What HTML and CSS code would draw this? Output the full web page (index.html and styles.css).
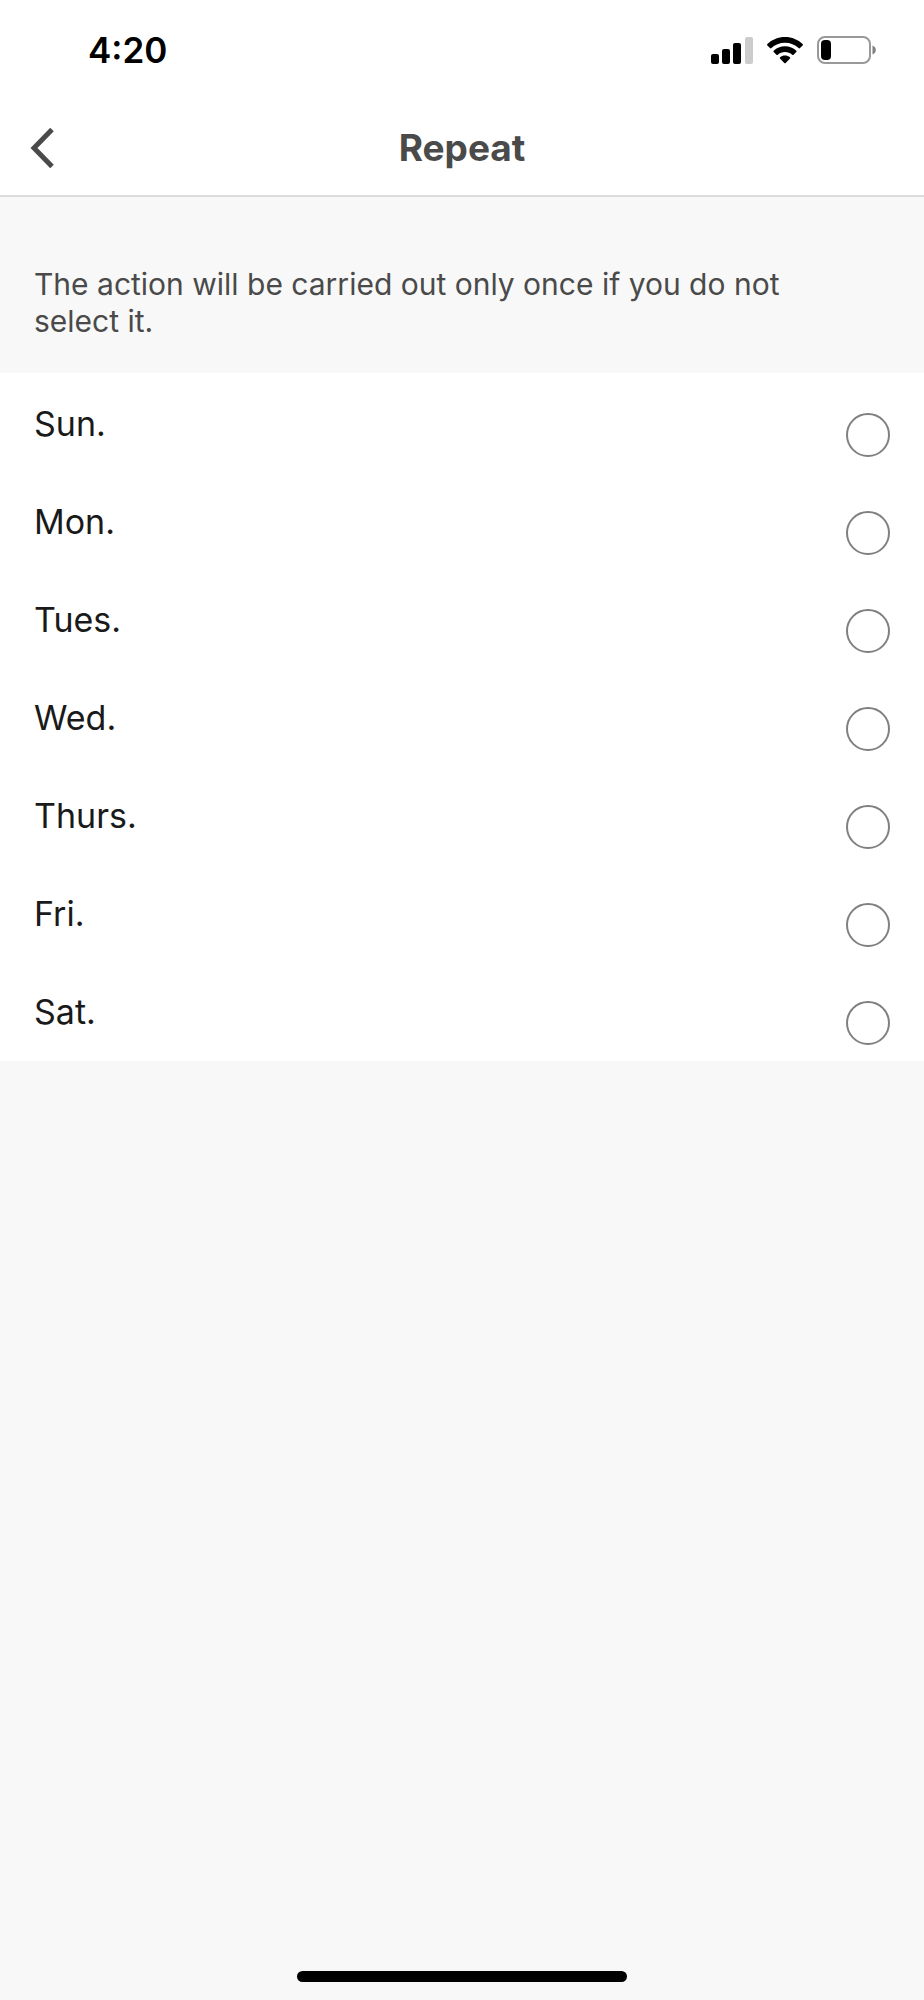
FILE: index.html
```html
<!DOCTYPE html>
<html lang="en">
<head>
  <meta charset="utf-8">
  <meta name="viewport" content="width=device-width, initial-scale=1">
  <title>Repeat</title>
  <link rel="stylesheet" href="styles.css">
</head>
<body>
  <div class="status-bar">
    <span class="time">4:20</span>
    <div class="status-icons">
      <svg class="signal" width="42" height="27" viewBox="0 0 42 27">
        <rect x="0" y="17" width="8" height="10" rx="2"/>
        <rect x="11" y="12" width="8" height="15" rx="2"/>
        <rect x="22" y="6" width="8" height="21" rx="2"/>
        <rect x="34" y="0" width="8" height="27" rx="2" fill="#cccccc"/>
      </svg>
      <svg class="wifi" width="36" height="27" viewBox="0 0 36 27">
        <path d="M18 0C11 0 4.800 2.700 .4 7c-.5.500-.5 1 0 1.500l2.600 2.600c.4.400 1 .4 1.400 0C8 7.700 12.700 5.700 18 5.700s10 2 13.600 5.400c.4.400 1 .4 1.400 0l2.600-2.600c.5-.5.500-1 0-1.500C31.200 2.700 25 0 18 0z"/>
        <path d="M18 9.200c-4.400 0-8.400 1.700-11.300 4.500-.5.500-.5 1 0 1.400l2.700 2.700c.4.400 1 .4 1.400 0 1.900-1.800 4.400-2.800 7.200-2.800s5.300 1 7.200 2.800c.4.400 1 .4 1.400 0l2.700-2.700c.5-.4.500-.9 0-1.400C26.400 10.900 22.400 9.200 18 9.200z"/>
        <path d="M18 18.600c-1.900 0-3.600.6-4.900 1.700-.5.400-.5.900-.1 1.300l4.300 4.400c.4.400 1 .4 1.400 0l4.300-4.400c.4-.4.400-.9-.1-1.300-1.300-1.100-3-1.700-4.900-1.700z"/>
      </svg>
      <svg class="battery" width="59" height="28" viewBox="0 0 59 28">
        <rect x="1" y="1" width="52" height="26" rx="7" fill="none" stroke="#999999" stroke-width="2"/>
        <rect x="4" y="4" width="10" height="20" rx="4"/>
        <path d="M55.500 9.500c2 .7 3.300 2.400 3.300 4.500s-1.300 3.800-3.300 4.500z" fill="#808080"/>
      </svg>
    </div>
  </div>

  <header class="header">
    <button type="button" class="back" aria-label="Back">
      <svg width="24" height="40" viewBox="0 0 24 40">
        <path d="M22 1.500L4 20l18 18.500" fill="none" stroke="#4a4a4a" stroke-width="5"/>
      </svg>
    </button>
    <h1 class="title">Repeat</h1>
  </header>

  <main>
    <p class="hint">The action will be carried out only once if you do not select it.</p>
    <div class="days">
      <label class="day">Sun.<input type="checkbox" class="circle"></label>
      <label class="day">Mon.<input type="checkbox" class="circle"></label>
      <label class="day">Tues.<input type="checkbox" class="circle"></label>
      <label class="day">Wed.<input type="checkbox" class="circle"></label>
      <label class="day">Thurs.<input type="checkbox" class="circle"></label>
      <label class="day">Fri.<input type="checkbox" class="circle"></label>
      <label class="day">Sat.<input type="checkbox" class="circle"></label>
    </div>
  </main>

  <div class="home-bar"></div>
</body>
</html>
```

FILE: styles.css
```css
* {
  box-sizing: border-box;
}
body {
  margin: 0;
  min-height: 100vh;
  display: flex;
  flex-direction: column;
  background-color: #f8f8f8;
  font-family: Inter, "Liberation Sans", sans-serif;
}
.status-bar {
  display: flex;
  justify-content: space-between;
  align-items: center;
  height: 100px;
  padding: 0 48px 0 88px;
  background-color: #fff;
}
.time {
  font-size: 35px;
  font-weight: 600;
  line-height: 40px;
}
.status-icons {
  display: flex;
  align-items: center;
  gap: 14px;
}
.header {
  display: grid;
  grid-template-columns: 64px 1fr 64px;
  align-items: center;
  height: 97px;
  background-color: #fff;
  border-bottom: 2px solid #dcdcdc;
}
.back {
  display: flex;
  justify-content: flex-end;
  padding: 0 10px 0 0;
  border: none;
  background: none;
}
.title {
  margin: 0;
  color: #4a4a4a;
  font-size: 37px;
  font-weight: 700;
  line-height: 44px;
  text-align: center;
}
main {
  flex: 1;
}
.hint {
  margin: 0;
  padding: 69px 100px 33px 34px;
  color: #4a4a4a;
  font-size: 30px;
  line-height: 37px;
}
.days {
  padding-top: 2px;
  background-color: #fff;
}
.day {
  display: flex;
  justify-content: space-between;
  height: 98px;
  padding: 29px 34px 16px;
  color: #1a1a1a;
  font-size: 34px;
  line-height: 40px;
}
.circle {
  appearance: none;
  align-self: flex-end;
  width: 44px;
  height: 44px;
  margin: 0;
  border: 2px solid #808080;
  border-radius: 50%;
}
.circle:checked {
  background-color: #808080;
}
.home-bar {
  width: 330px;
  height: 11px;
  margin: 0 auto 18px;
  border-radius: 6px;
  background-color: #000;
}
```
